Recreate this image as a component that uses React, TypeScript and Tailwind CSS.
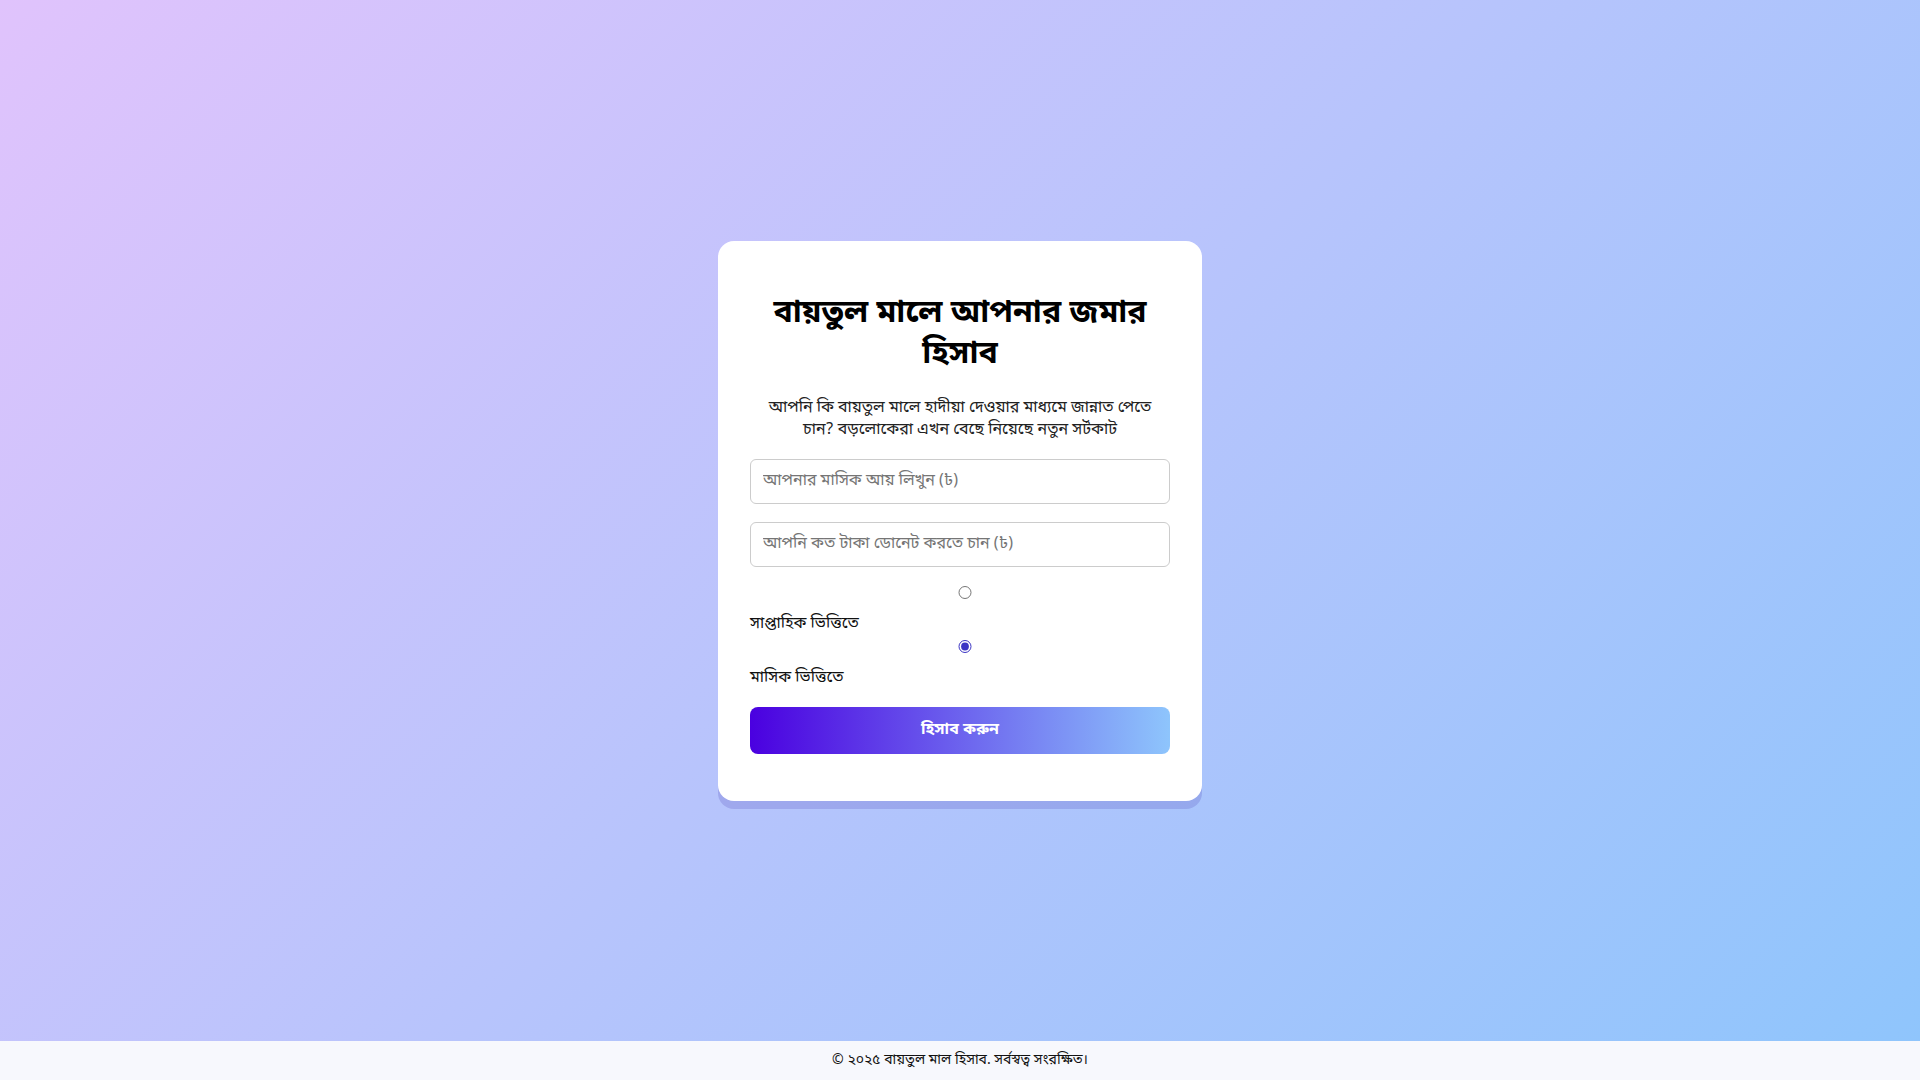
import React, { useState } from "react";

export default function App() {
  const [mode, setMode] = useState<"weekly" | "monthly">("monthly");
  return (
    <div
      className="min-h-screen flex flex-col bg-[linear-gradient(135deg,#e0c3fc_0%,#8ec5fc_100%)] text-[#111]"
      style={{ fontFamily: '"Noto Sans Bengali", "Noto Sans", sans-serif' }}
    >
      <main className="flex-1 flex items-center justify-center">
        <div className="w-[484px] bg-white rounded-2xl px-8 pt-8 pb-[32px] shadow-[0_8px_0_rgba(70,60,180,0.2)] text-center">
          <h1 className="text-[32px] font-bold leading-[41px] mt-[21px] mb-[21px] text-black">
            বায়তুল মালে আপনার জমার হিসাব
          </h1>
          <p className="text-base leading-[22px] mb-[18px] px-[16px] text-[#222]">
            আপনি কি বায়তুল মালে হাদীয়া দেওয়ার মাধ্যমে জান্নাত পেতে চান? বড়লোকেরা এখন বেছে নিয়েছে নতুন সর্টকাট
          </p>
          <input
            type="number"
            placeholder="আপনার মাসিক আয় লিখুন (৳)"
            className="block w-full h-[45px] px-3 border border-[#ccc] rounded-md text-base mb-[18px] outline-none placeholder:text-[#757575]"
          />
          <input
            type="number"
            placeholder="আপনি কত টাকা ডোনেট করতে চান (৳)"
            className="block w-full h-[45px] px-3 border border-[#ccc] rounded-md text-base mb-[19px] outline-none placeholder:text-[#757575]"
          />
          <div className="text-left">
            <input
              type="radio"
              name="freq"
              checked={mode === "weekly"}
              onChange={() => setMode("weekly")}
              className="block w-full h-[13px] ml-[5px] mb-[13px] accent-[#3b34c4]"
            />
            <label className="block text-base leading-[24px] mb-[4px] text-[#111]">সাপ্তাহিক ভিত্তিতে</label>
            <input
              type="radio"
              name="freq"
              checked={mode === "monthly"}
              onChange={() => setMode("monthly")}
              className="block w-full h-[13px] ml-[5px] mb-[13px] accent-[#3b34c4]"
            />
            <label className="block text-base leading-[24px] mb-[17px] text-[#111]">মাসিক ভিত্তিতে</label>
          </div>
          <button className="w-full h-[47px] rounded-lg bg-[linear-gradient(90deg,#4a00e0_0%,#8ec5fc_100%)] text-white font-bold text-base mb-[15px]">
            হিসাব করুন
          </button>
        </div>
      </main>
      <footer className="h-[39px] bg-[#f7f8fd] flex items-center justify-center text-sm text-[#111]">
        © ২০২৫ বায়তুল মাল হিসাব. সর্বস্বত্ব সংরক্ষিত।
      </footer>
    </div>
  );
}
